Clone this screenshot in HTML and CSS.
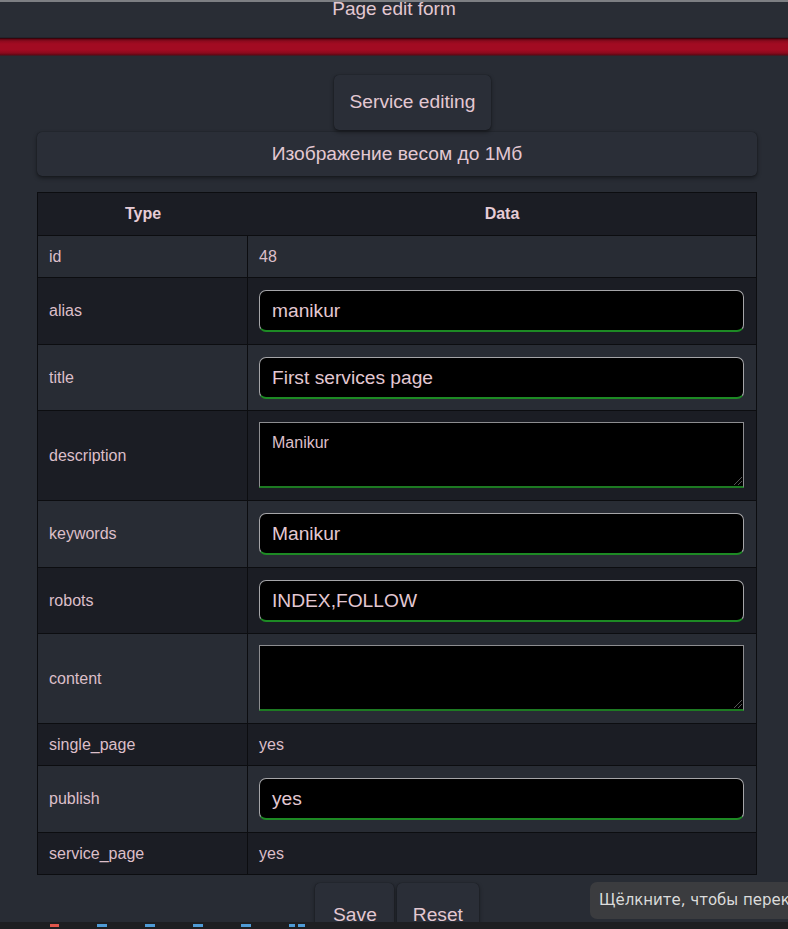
FILE: index.html
```html
<!DOCTYPE html>
<html lang="ru">
<head>
<meta charset="utf-8">
<title>Page edit form</title>
<link rel="stylesheet" href="styles.css">
</head>
<body>
<header class="topbar">
  <h1 class="page-title">Page edit form</h1>
</header>
<div class="redbar"></div>
<main class="wrap">
  <div class="title-row"><div class="btn btn-title">Service editing</div></div>
  <div class="btn btn-wide">Изображение весом до 1Мб</div>
  <table class="data">
    <colgroup><col class="col1"><col class="col2"></colgroup>
    <thead>
      <tr><th>Type</th><th>Data</th></tr>
    </thead>
    <tbody>
      <tr class="odd"><td>id</td><td>48</td></tr>
      <tr class="even"><td>alias</td><td><div class="inp">manikur</div></td></tr>
      <tr class="odd"><td>title</td><td><div class="inp">First services page</div></td></tr>
      <tr class="even"><td>description</td><td><div class="ta">Manikur<span class="grip"></span></div></td></tr>
      <tr class="odd"><td>keywords</td><td><div class="inp">Manikur</div></td></tr>
      <tr class="even"><td>robots</td><td><div class="inp">INDEX,FOLLOW</div></td></tr>
      <tr class="odd"><td>content</td><td><div class="ta"><span class="grip"></span></div></td></tr>
      <tr class="even"><td>single_page</td><td>yes</td></tr>
      <tr class="odd"><td>publish</td><td><div class="inp">yes</div></td></tr>
      <tr class="even last"><td>service_page</td><td>yes</td></tr>
    </tbody>
  </table>
  <div class="actions">
    <div class="btn btn-act save">Save</div>
    <div class="btn btn-act">Reset</div>
  </div>
</main>
<div class="tooltip">Щёлкните, чтобы переключиться</div>
<div class="taskbar">
  <span class="dash red"></span>
  <span class="dash"></span>
  <span class="dash"></span>
  <span class="dash"></span>
  <span class="dash"></span>
  <span class="dash pair"></span>
</div>
</body>
</html>
```
FILE: styles.css
```css
html, body {
  margin: 0;
  padding: 0;
}
body {
  width: 788px;
  height: 929px;
  overflow: hidden;
  background: #282c34;
  font-family: "Liberation Sans", Arial, sans-serif;
  color: #dcbfc9;
  position: relative;
}
.topbar {
  height: 35px;
  border-top: 2px solid #7d7f83;
  background: #292d35;
  border-bottom: 1px solid #22252c;
  overflow: hidden;
}
.page-title {
  margin: -5px 0 0;
  font-size: 19px;
  font-weight: normal;
  text-align: center;
  line-height: 24px;
  color: #e3c8d2;
}
.redbar {
  height: 18px;
  background: linear-gradient(#1a0004 0, #5a0612 1px, #8d0a1e 3px, #a20b22 6px, #a20b22 12px, #8c0a1e 15px, #5e0814 17px, #2c2a30 18px);
}
.wrap {
  width: 720px;
  margin-left: 37px;
  padding-top: 19px;
}
.title-row {
  display: flex;
  justify-content: center;
  padding-left: 31px;
}
.btn {
  background: #2a2e37;
  border-radius: 5px;
  box-shadow: 0 2px 4px rgba(0, 0, 0, 0.45), 0 0 1px rgba(0, 0, 0, 0.6);
  color: #e3c8d2;
  font-size: 19.2px;
  text-align: center;
}
.btn-title {
  height: 55px;
  line-height: 53px;
  padding: 0 16px;
}
.btn-wide {
  margin-top: 2px;
  height: 44px;
  line-height: 44px;
}
table.data {
  margin-top: 16px;
  width: 720px;
  table-layout: fixed;
  border-collapse: separate;
  border-spacing: 0;
  border: 1px solid #0c0d10;
  font-size: 16px;
}
.col1 { width: 210px; }
.data th {
  background: #1b1d24;
  height: 42px;
  padding: 0;
  border-bottom: 1px solid #0c0d10;
  font-weight: bold;
  font-size: 16px;
  color: #e6ccd6;
  text-align: center;
}
.data td {
  border-bottom: 1px solid #0c0d10;
  padding: 9px 12px 8px 11px;
  line-height: 24px;
  color: #dcbfc9;
  vertical-align: middle;
}
.data td:first-child {
  border-right: 1px solid #0c0d10;
  padding-left: 11px;
}
.data tr.last td { border-bottom: none; }
.data tr.odd td { background: #282c34; }
.data tr.even td { background: #1b1d24; }
.data td .inp {
  margin: 3px 0 3.5px;
}
.data td .ta {
  margin: 2px 0 4px;
}
.inp {
  height: 42px;
  box-sizing: border-box;
  background: #000;
  border: 1px solid #a5a5a8;
  border-bottom: 2px solid #1d8a24;
  border-radius: 7px;
  padding: 0 12px;
  font-size: 19.2px;
  line-height: 39px;
  color: #e3c8d2;
}
.ta {
  position: relative;
  height: 66px;
  box-sizing: border-box;
  background: #000;
  border: 1px solid #8d8d90;
  border-bottom: 2px solid #1d7a22;
  padding: 10px 12px;
  font-size: 16px;
  line-height: 20px;
  color: #dcbfc9;
}
.grip {
  position: absolute;
  right: 1px;
  bottom: 1px;
  width: 8px;
  height: 8px;
  background: linear-gradient(135deg, transparent 45%, #555 45%, #555 55%, transparent 55%, transparent 70%, #555 70%, #555 80%, transparent 80%);
}
.actions {
  display: flex;
  justify-content: center;
  gap: 3px;
  margin-top: 8px;
}
.btn-act {
  height: 62px;
  line-height: 64px;
  padding: 0 16px;
}
.btn-act.save {
  padding: 0 17px 0 18px;
}
.tooltip {
  position: absolute;
  left: 590px;
  top: 882px;
  height: 37px;
  padding: 0 9px;
  background: #3b3c3f;
  border-radius: 7px;
  font-family: "DejaVu Sans", sans-serif;
  font-size: 15px;
  line-height: 37px;
  color: #dcdcdc;
  white-space: nowrap;
}
.taskbar {
  position: absolute;
  left: 0;
  bottom: 0;
  width: 788px;
  height: 7px;
  background: #1e1f22;
  display: flex;
  align-items: center;
  padding-left: 50px;
  box-sizing: border-box;
  gap: 38px;
}
.dash {
  width: 10px;
  height: 3px;
  background: #4f9bd6;
}
.dash.red {
  width: 9px;
  background: #e0564c;
}
.dash.pair {
  width: 16px;
  background: linear-gradient(90deg, #4f9bd6 0 6px, transparent 6px 9px, #4f9bd6 9px 16px);
}
```
